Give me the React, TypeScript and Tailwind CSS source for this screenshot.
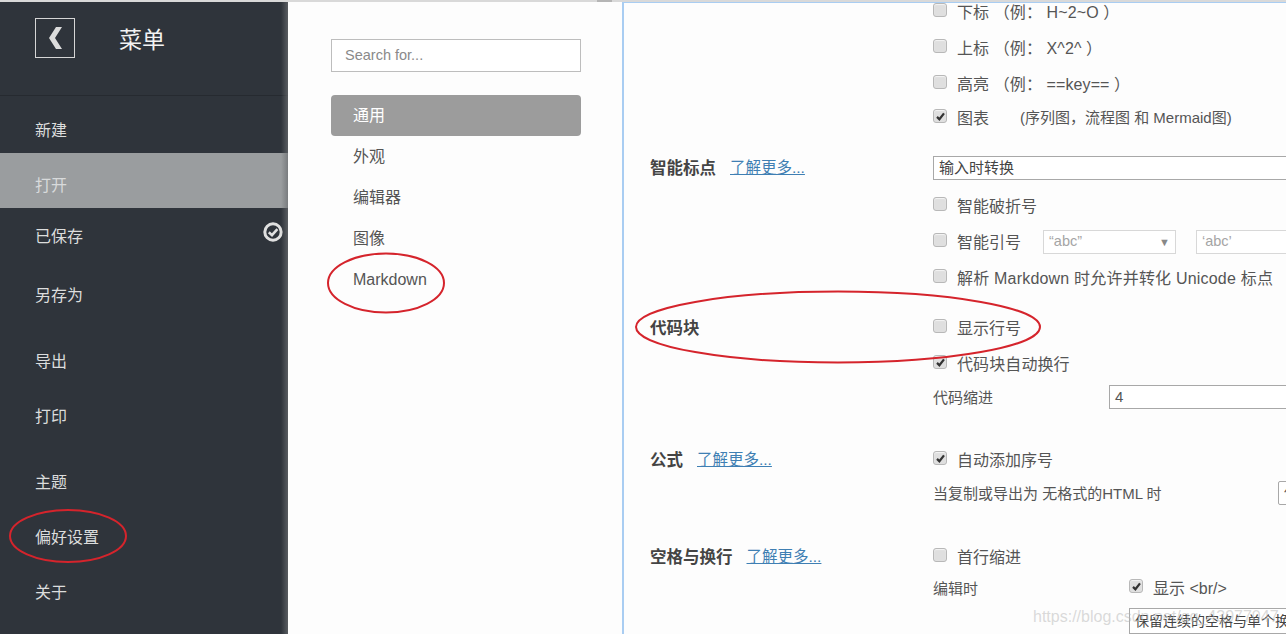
import React from "react";

const font = "font-['Liberation_Sans','Noto_Sans_CJK_SC',sans-serif]";

const Check = ({ on = false }: { on?: boolean }) => (
  <span className="flex h-[14px] w-[14px] shrink-0 -translate-y-[2px] items-center justify-center rounded-[3px] border border-[#b8b8b8] bg-[#dfdfdf] shadow-[inset_0_1px_1px_#f4f4f4]">
    {on && (
      <svg viewBox="0 0 12 12" className="h-[11px] w-[11px]">
        <path d="M2.2 6.4 L4.8 9 L9.8 2.6" fill="none" stroke="#333" strokeWidth="2.4" />
      </svg>
    )}
  </span>
);

const Opt = ({ on, text, cls }: { on?: boolean; text: string; cls: string }) => (
  <div className={`flex shrink-0 items-center gap-[10px] text-[16px] text-[#555] ${cls}`}>
    <Check on={on} />
    <span className="pt-[1px]">{text}</span>
  </div>
);

const More = () => <a className="text-[15.5px] text-[#3f7fb3] underline">了解更多...</a>;

export default function App() {
  const menu = [
    { label: "新建", cls: "h-[57px] pt-[25px]" },
    { label: "打开", cls: "h-[55px] pt-[23px] bg-[#9a9d9f] text-[#d8dadb]" },
    { label: "已保存", cls: "h-[50px] pt-[19px]" },
    { label: "另存为", cls: "h-[60px] pt-[28px]" },
    { label: "导出", cls: "h-[60px] pt-[34px]" },
    { label: "打印", cls: "h-[50px] pt-[29px]" },
    { label: "主题", cls: "h-[60px] pt-[45px]" },
    { label: "偏好设置", cls: "h-[55px] pt-[40px]" },
    { label: "关于", cls: "h-[55px] pt-[40px]" },
  ];

  return (
    <div className={`relative flex h-[634px] w-[1286px] flex-col overflow-hidden bg-[#fdfdfd] ${font}`}>
      {/* strip of the window behind, only the feet of its row show */}
      <div className="flex h-[2px] shrink-0 items-end overflow-hidden bg-[#d9d9d9] pl-[597px]">
        <span className="h-[2px] w-[15px] shrink-0 bg-[#b5b5b5]" />
        <span className="ml-[10px] shrink-0 text-[16px] leading-[20px] text-[#666]">下标 （例： H~2~O ）</span>
      </div>

      <div className="flex min-h-0 flex-1">
        {/* Menu */}
        <aside className="relative w-[288px] shrink-0 bg-[#2f343b] text-[16px] text-[#dcdddd]">
          <div className="flex h-[94px] items-start border-b border-[#262a30] pl-[35px] pt-[16px]">
            <div className="flex h-[40px] w-[40px] items-center justify-center border border-[#d6d6d6]">
              <svg viewBox="0 0 13 22" className="h-[22px] w-[13px]">
                <polygon points="7,0 13,0 6,11 13,22 7,22 0,11" fill="#dcdcdc" />
              </svg>
            </div>
            <h1 className="ml-[44px] pt-[7px] text-[23px] leading-[30px] text-[#f2f2f2]">菜单</h1>
          </div>
          {menu.map((item) => (
            <div key={item.label} className={`relative pl-[35px] leading-[20px] ${item.cls}`}>
              {item.label}
              {item.label === "已保存" && (
                <svg viewBox="0 0 20 20" className="absolute right-[5px] top-[14px] h-[20px] w-[20px]" fill="none" stroke="#e0e0e0">
                  <circle cx="10" cy="10" r="8.2" strokeWidth="3" />
                  <path d="M5.8 10.2 L9 13.2 L14.4 7.2" strokeWidth="2.6" />
                </svg>
              )}
            </div>
          ))}
          <div className="absolute bottom-0 right-0 top-0 w-[7px] bg-gradient-to-r from-transparent to-[#6b6e71]/70" />
        </aside>

        {/* Settings groups */}
        <nav className="w-[334px] shrink-0 bg-[#fdfdfd] pl-[43px] pt-[37px] text-[16px] text-[#555]">
          <div className="flex h-[33px] w-[250px] items-center border border-[#bdbdbd] bg-white pl-[13px] pt-[1px] text-[14.5px] text-[#8a8a8a]">
            Search for...
          </div>
          <div className="mt-[23px] flex h-[41px] w-[250px] items-center rounded-[4px] bg-[#9c9c9c] pl-[22px] text-white">通用</div>
          {["外观", "编辑器", "图像", "Markdown"].map((t) => (
            <div key={t} className="flex h-[41px] items-center pl-[22px]">
              {t}
            </div>
          ))}
        </nav>

        {/* Markdown panel */}
        <main className="min-w-0 flex-1 overflow-hidden border-l-2 border-t border-[#a9cdf2] bg-[#fdfdfd]">
          <div className="-mt-[9px] pl-[309px]">
            <Opt text="下标 （例： H~2~O ）" cls="h-[36px] tracking-[0.1px]" />
            <Opt text="上标 （例： X^2^ ）" cls="h-[36px] tracking-[0.1px]" />
            <Opt text="高亮 （例： ==key== ）" cls="h-[36px] tracking-[0.1px]" />
            <div className="flex h-[32px] items-center text-[#555]">
              <Opt on text="图表" cls="w-[87px]" />
              <span className="text-[15px]">(序列图，流程图 和 Mermaid图)</span>
            </div>
          </div>

          <section className="mt-[22px] flex">
            <div className="flex h-[24px] w-[309px] shrink-0 items-center gap-[14px] pl-[26px]">
              <b className="text-[16.5px] font-bold text-[#444]">智能标点</b>
              <More />
            </div>
            <div className="min-w-0 flex-1">
              <div className="flex h-[24px] w-[400px] items-center border border-[#a8a8a8] bg-white pl-[5px] pt-[1px] text-[15px] text-[#444]">输入时转换</div>
              <Opt text="智能破折号" cls="mt-[8px] h-[36px]" />
              <div className="flex h-[36px] items-center">
                <Opt text="智能引号" cls="w-[110px]" />
                <div className="flex h-[24px] w-[133px] shrink-0 items-center justify-between border border-[#d8d8d8] bg-white pl-[5px] pr-[5px] text-[14.5px] text-[#a5a5a5]">
                  <span>“abc”</span>
                  <span className="text-[11px] text-[#888]">▼</span>
                </div>
                <div className="ml-[20px] flex h-[24px] w-[133px] shrink-0 items-center border border-[#d8d8d8] bg-white pl-[5px] text-[14.5px] text-[#a5a5a5]">‘abc’</div>
              </div>
              <Opt text="解析 Markdown 时允许并转化 Unicode 标点" cls="h-[36px] tracking-[0.2px]" />
            </div>
          </section>

          <section className="mt-[14px] flex">
            <div className="flex h-[36px] w-[309px] shrink-0 items-center pl-[26px]">
              <b className="text-[16.5px] font-bold text-[#444]">代码块</b>
            </div>
            <div className="min-w-0 flex-1">
              <Opt text="显示行号" cls="h-[36px]" />
              <Opt on text="代码块自动换行" cls="h-[36px] tracking-[0.1px]" />
              <div className="mt-[3px] flex h-[24px] items-center text-[15px] text-[#555]">
                <span className="w-[176px] shrink-0 pt-[2px]">代码缩进</span>
                <div className="flex h-[24px] w-[300px] shrink-0 items-center border border-[#a8a8a8] bg-white pl-[5px] text-[#555]">4</div>
              </div>
            </div>
          </section>

          <section className="mt-[33px] flex">
            <div className="flex h-[36px] w-[309px] shrink-0 items-center gap-[14px] pl-[26px]">
              <b className="text-[16.5px] font-bold text-[#444]">公式</b>
              <More />
            </div>
            <div className="min-w-0 flex-1">
              <Opt on text="自动添加序号" cls="h-[36px]" />
              <div className="flex h-[30px] items-center text-[15px] text-[#555]">
                <span className="w-[345px] shrink-0 pt-[2px]">当复制或导出为 无格式的HTML 时</span>
                <div className="flex h-[24px] w-[100px] shrink-0 items-center rounded-[2px] border border-[#a8a8a8] bg-white pl-[5px] text-[#555]">保留</div>
              </div>
            </div>
          </section>

          <section className="mt-[31px] flex">
            <div className="flex h-[36px] w-[309px] shrink-0 items-center gap-[14px] pl-[26px]">
              <b className="text-[16.5px] font-bold text-[#444]">空格与换行</b>
              <More />
            </div>
            <div className="min-w-0 flex-1">
              <Opt text="首行缩进" cls="h-[36px]" />
              <div className="-mt-[1px] flex h-[28px] items-center text-[15px] text-[#555]">
                <span className="w-[196px] shrink-0 pt-[2px]">编辑时</span>
                <Opt on text="显示 <br/>" cls="" />
              </div>
              <div className="ml-[196px] mt-[6px] flex h-[26px] w-[300px] items-center border border-[#a8a8a8] bg-white pl-[5px] text-[14px] text-[#444]">
                保留连续的空格与单个换行
              </div>
            </div>
          </section>
        </main>
      </div>

      {/* red hand-drawn marks and the watermark lie over the page */}
      <svg className="pointer-events-none absolute left-0 top-0 h-[634px] w-[1286px]" viewBox="0 0 1286 634" fill="none" stroke="#d5242c" strokeWidth="2">
        <ellipse cx="68" cy="536" rx="58" ry="26" />
        <ellipse cx="386" cy="283" rx="58" ry="29.5" />
        <ellipse cx="838" cy="327" rx="202" ry="35.5" />
      </svg>
      <span className="pointer-events-none absolute left-[1033px] top-[607px] text-[16px] leading-[20px] text-[#b5b5b5]/50">https://blog.csdn.net/qq_43977047</span>
    </div>
  );
}
